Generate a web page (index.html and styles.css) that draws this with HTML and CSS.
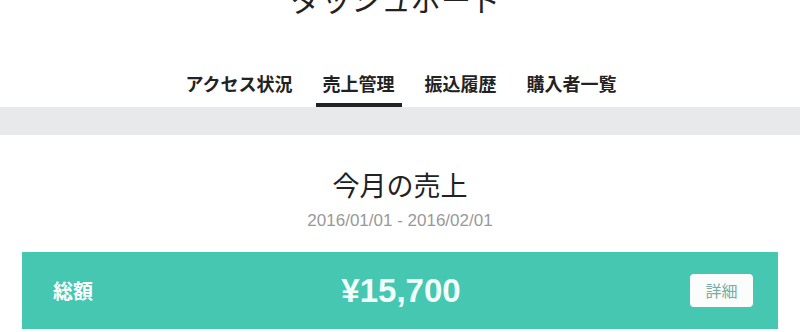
FILE: index.html
```html
<!DOCTYPE html>
<html lang="ja">
<head>
<meta charset="utf-8">
<title>ダッシュボード</title>
<link rel="stylesheet" href="styles.css">
</head>
<body>
<header class="header">
  <h1 class="page-title">ダッシュボード</h1>
  <nav class="tabs">
    <a class="tab">アクセス状況</a>
    <a class="tab tab-active">売上管理</a>
    <a class="tab">振込履歴</a>
    <a class="tab">購入者一覧</a>
  </nav>
</header>
<div class="band"></div>
<main class="sales">
  <h2 class="sales-title">今月の売上</h2>
  <p class="sales-period">2016/01/01 - 2016/02/01</p>
  <div class="total-bar">
    <span class="total-label">総額</span>
    <span class="total-amount">¥15,700</span>
    <button class="detail-btn">詳細</button>
  </div>
</main>
</body>
</html>
```

FILE: styles.css
```css
html, body {
  margin: 0;
  padding: 0;
  background: #ffffff;
}
body {
  font-family: "Noto Sans CJK JP", "Noto Sans", sans-serif;
  color: #222222;
  overflow: hidden;
}
.header {
  display: flex;
  flex-direction: column;
  align-items: center;
}
.page-title {
  margin: -17px 0 0;
  font-size: 30px;
  line-height: 30px;
  font-weight: 400;
  color: #222222;
  letter-spacing: 0;
  padding-right: 8px;
}
.tabs {
  display: flex;
  justify-content: center;
  gap: 16px;
  margin-top: 61px;
  padding-left: 2px;
}
.tab {
  display: block;
  padding: 0 7px 11px;
  font-size: 18px;
  line-height: 18px;
  font-weight: 700;
  color: #222222;
  border-bottom: 4px solid transparent;
}
.tab-active {
  border-bottom-color: #222222;
}
.band {
  height: 28px;
  background: #e8e9ea;
}
.sales {
  display: flex;
  flex-direction: column;
  align-items: center;
  padding-top: 36px;
}
.sales-title {
  margin: 0;
  font-size: 27px;
  line-height: 28px;
  font-weight: 400;
  color: #222222;
}
.sales-period {
  margin: 12px 0 0;
  font-family: "Liberation Sans", Arial, sans-serif;
  font-size: 17px;
  line-height: 20px;
  color: #999999;
}
.total-bar {
  align-self: stretch;
  margin: 21px 22px 0;
  height: 77px;
  background: #45c7b2;
  display: grid;
  grid-template-columns: 1fr auto 1fr;
  align-items: center;
  padding: 0 25px 0 31px;
}
.total-label {
  font-size: 20px;
  font-weight: 700;
  color: #ffffff;
  justify-self: start;
}
.total-amount {
  font-family: "Liberation Sans", Arial, sans-serif;
  font-size: 33px;
  font-weight: 700;
  color: #f2fffb;
  padding-right: 4px;
}
.detail-btn {
  justify-self: end;
  width: 63px;
  height: 33px;
  border: none;
  border-radius: 4px;
  background: #fbfdfc;
  color: #74ada3;
  font-family: "Noto Sans CJK JP", sans-serif;
  font-size: 16px;
  line-height: 33px;
  padding: 0;
}
```
